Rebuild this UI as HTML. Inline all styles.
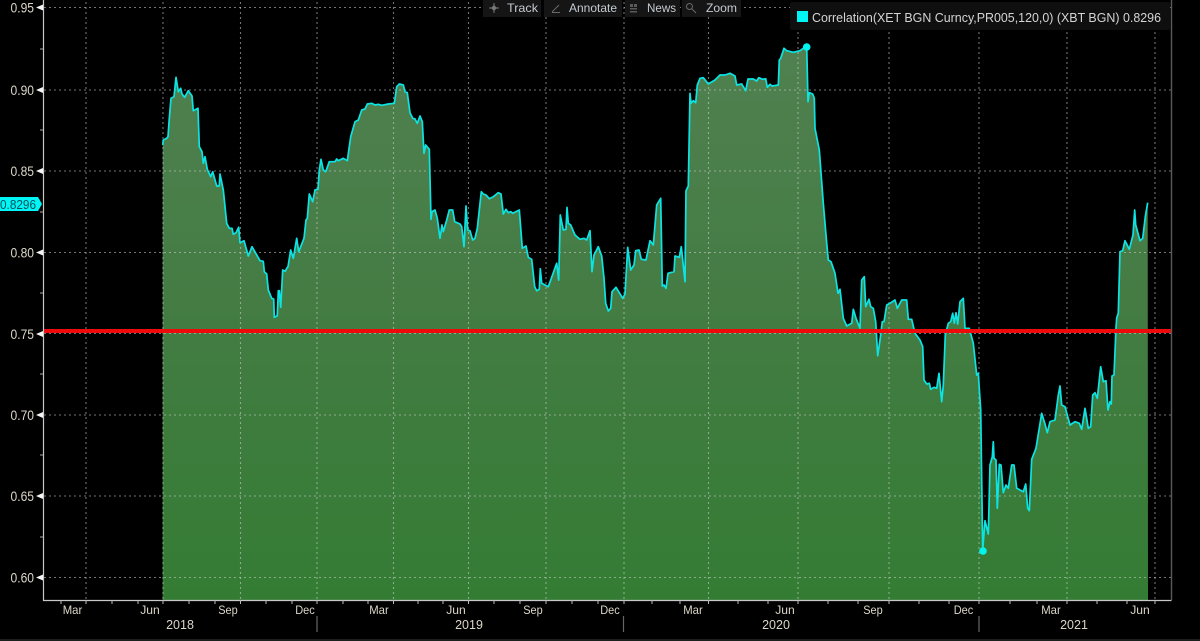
<!DOCTYPE html>
<html><head><meta charset="utf-8"><title>Correlation chart</title>
<style>
html,body{margin:0;padding:0;background:#000;width:1200px;height:641px;overflow:hidden}
svg{display:block}
text{font-family:"Liberation Sans",sans-serif;fill:#dcd6c8}
</style></head><body>
<svg width="1200" height="641" viewBox="0 0 1200 641" xmlns="http://www.w3.org/2000/svg">
<defs><linearGradient id="g" gradientUnits="userSpaceOnUse" x1="0" y1="45" x2="0" y2="600">
<stop offset="0" stop-color="#508050"/><stop offset="0.5" stop-color="#437c43"/><stop offset="1" stop-color="#347c34"/></linearGradient></defs>
<rect width="1200" height="641" fill="#000"/>
<polygon fill="url(#g)" points="162.7,600 162.7,145 163.3,140 166.7,138.3 168,136.7 169.3,118.3 171,98.3 174,96.7 176,77.3 178.3,91.7 180.7,88.3 182,94 184.7,97.3 188.3,90.7 192,96 193.3,110.7 198,108.3 199.3,146.7 202,151.7 203.3,163.3 205,156.7 207.3,169.3 210.7,176.7 212.7,171.7 216.7,186 219.3,186 220,174 223.3,190 226.7,223.3 229.3,228.3 232,228.3 233.3,234.3 236,232.7 238.7,227.3 240,242.7 244,240.7 248.3,256 252,246.7 260,260.7 263.3,261.3 264.3,271.7 266.7,274 268.3,290 271.7,298.3 273.7,299 274.3,317.3 277.3,315.7 278.3,290.7 279.3,290.7 280.7,307.3 282.7,270 285.3,271.3 286.7,268.3 288,266.7 290.7,250 293.3,258.3 296.7,238.3 298.7,251.7 304,238.3 306,220 307.3,218.3 309.3,194 312.7,201.7 315,190 318,189.3 319.3,170 321,159.3 323.3,170 325.7,171.7 329.3,161.7 335,161.7 336.7,159 338.3,160.7 343.3,158.3 347.3,160.7 350.7,136.7 355,121.7 358.3,120 361.7,110 365,109 367.3,104 371.7,103.3 375,105 378.3,104.3 381.7,105.3 388.3,104 394.3,103.3 396.7,86.7 399.3,84 403.3,85 405,91.7 407.3,92.7 410,112.7 412.7,118.3 415,119 417.3,123.3 420,116 422.3,121.7 424,153.3 425.7,145 429.3,149.3 431,219.3 432,211.7 435,210 437.3,218.3 440,238.3 442,225 443.3,231.7 446.7,220 449.3,210 452.7,210 454.7,221.7 460,224 461.7,226.7 464,246.7 466,206 467.7,230 470,230.7 472.7,240 475,238.3 477.3,228.3 481.3,191.7 483.3,194 486,195 489.3,198.7 493.3,196.7 498.3,192.7 501,194 503.3,214 506,209.3 508.3,212.7 510.7,211.7 512.7,213.3 519.3,210 522.3,248.3 526,246 528.3,257.3 531.7,259.3 534.7,286.7 536.7,290.7 539.3,289.3 540.3,268.7 541.7,283.3 548.3,286.7 556.7,263.3 558.7,280 560.3,215 563.3,230 566,229.3 567,207.3 568.3,223.3 570.7,225 575,235 580,239.3 584,238.3 586.7,240 590,230.7 592,271.7 594,255 598.3,246.7 601.7,256 604,278.3 605.7,303.3 608.3,311 610.7,308.3 612,291.7 616,287.3 622.7,298.3 625,294 627.7,247.3 630.7,270 634,265 635.7,250.7 639,250 641.3,259.3 646,260 650,240.7 653.3,245 656.7,205 660.7,198.3 662.3,286 664,285 666,288.3 668,273.3 674,271.7 675,256 679.3,257.3 681.3,246.7 685,281.7 686,190.7 688.3,186 690,93.3 691,103.3 693.3,100.7 695.7,102.7 697.3,85 700,78.3 703.3,77.7 708.3,84 715,80 720,75 725,75 730,73.3 735,76 736.7,85 741.7,84 745.7,90.7 748,79 753.3,79 756.7,81 758.7,77.7 762.7,79.3 765.7,78.7 767.3,87.3 770,84.3 772,86 778.3,85 779.3,60 780.7,58.3 784,48.3 786.7,50.7 793.3,52.3 800,50.7 803.3,48.3 806.7,46.7 808,101.7 809.3,92.7 812.7,94 814.3,98.3 815,128.3 819.3,150 823.3,203.3 826.7,243.3 828.3,260 831,261.7 835,273.3 838,293.3 840,289.3 843.3,318.3 846.7,326 851.7,323.3 853.3,309.3 856,318.3 860,328.3 861.7,280 864.3,276.7 865.7,306.7 869,299.3 870.7,306.7 873.3,308.3 875.7,321.7 877.7,355.7 880,340 882.3,321.7 884,321.7 886.7,305 890,303.3 895,300 897.3,308.3 901.7,300 906.7,300 908.3,319.3 911.7,319.3 915,333.3 920,340 922.7,346.7 924,380 926.7,384 929.3,383.3 930.7,389.3 934,387.3 936.7,388.3 939,373.3 941.7,401.7 943.3,385 945.3,335 948.3,323.3 950.7,321.7 952.7,313.3 954.3,323.3 956,312.7 957.7,324 960,301.7 963.3,298.3 965,328.3 969.3,328.3 973.3,343.3 976.7,375 978.3,373.3 980.7,410 982.7,550 985,520.7 988.3,534 990,465 992.3,456.7 993.3,441.7 994,458.3 996,460 997.3,508.3 999.3,464.3 1001,465 1003.3,492.7 1006,485 1008.3,488.3 1011.7,465 1014,465 1016.7,488.3 1023.3,491.7 1025.7,484 1027.7,508.3 1029.3,510.7 1031.7,459.3 1036,448.3 1041.7,413.3 1045,424 1047.3,432.7 1050,421.7 1055,420 1058.3,395 1060,386 1061.7,405 1065,406.7 1070,425 1075,421.7 1079.3,423.3 1081.7,429.3 1085,408.3 1088.3,428.3 1090.7,426.7 1092.7,395 1095,392.7 1097.3,398.3 1100.7,366.7 1103.3,381.7 1106,380.7 1108,410 1110,401.7 1111.3,404 1112,376 1114,375 1116,328 1116.7,318 1118.3,313 1120,251.7 1122.7,250.7 1125,240.7 1129.3,249.3 1133,235 1134.7,210 1135.7,225 1140,240.7 1142.7,238.3 1145.3,216.7 1147.7,202.7 1148,600"/>
<g stroke="#d2d2d2" stroke-opacity=".55" stroke-width="1.100" stroke-dasharray="2 3" fill="none">
<path d="M44 7.500H1171M44 90H1171M44 171H1171M44 252.500H1171M44 333.500H1171M44 415H1171M44 496H1171M44 577.500H1171"/>
<path d="M86 2V600M163 2V600M240.500 2V600M317 2V600M393.500 2V600M468.500 2V600M546 2V600M624 2V600M708.500 2V600M798 2V600M889 2V600M979 2V600M1067 2V600M1155 2V600"/>
</g>
<polyline fill="none" stroke="#0ce4e4" stroke-width="1.700" stroke-linejoin="round" points="162.7,145 163.3,140 166.7,138.3 168,136.7 169.3,118.3 171,98.3 174,96.7 176,77.3 178.3,91.7 180.7,88.3 182,94 184.7,97.3 188.3,90.7 192,96 193.3,110.7 198,108.3 199.3,146.7 202,151.7 203.3,163.3 205,156.7 207.3,169.3 210.7,176.7 212.7,171.7 216.7,186 219.3,186 220,174 223.3,190 226.7,223.3 229.3,228.3 232,228.3 233.3,234.3 236,232.7 238.7,227.3 240,242.7 244,240.7 248.3,256 252,246.7 260,260.7 263.3,261.3 264.3,271.7 266.7,274 268.3,290 271.7,298.3 273.7,299 274.3,317.3 277.3,315.7 278.3,290.7 279.3,290.7 280.7,307.3 282.7,270 285.3,271.3 286.7,268.3 288,266.7 290.7,250 293.3,258.3 296.7,238.3 298.7,251.7 304,238.3 306,220 307.3,218.3 309.3,194 312.7,201.7 315,190 318,189.3 319.3,170 321,159.3 323.3,170 325.7,171.7 329.3,161.7 335,161.7 336.7,159 338.3,160.7 343.3,158.3 347.3,160.7 350.7,136.7 355,121.7 358.3,120 361.7,110 365,109 367.3,104 371.7,103.3 375,105 378.3,104.3 381.7,105.3 388.3,104 394.3,103.3 396.7,86.7 399.3,84 403.3,85 405,91.7 407.3,92.7 410,112.7 412.7,118.3 415,119 417.3,123.3 420,116 422.3,121.7 424,153.3 425.7,145 429.3,149.3 431,219.3 432,211.7 435,210 437.3,218.3 440,238.3 442,225 443.3,231.7 446.7,220 449.3,210 452.7,210 454.7,221.7 460,224 461.7,226.7 464,246.7 466,206 467.7,230 470,230.7 472.7,240 475,238.3 477.3,228.3 481.3,191.7 483.3,194 486,195 489.3,198.7 493.3,196.7 498.3,192.7 501,194 503.3,214 506,209.3 508.3,212.7 510.7,211.7 512.7,213.3 519.3,210 522.3,248.3 526,246 528.3,257.3 531.7,259.3 534.7,286.7 536.7,290.7 539.3,289.3 540.3,268.7 541.7,283.3 548.3,286.7 556.7,263.3 558.7,280 560.3,215 563.3,230 566,229.3 567,207.3 568.3,223.3 570.7,225 575,235 580,239.3 584,238.3 586.7,240 590,230.7 592,271.7 594,255 598.3,246.7 601.7,256 604,278.3 605.7,303.3 608.3,311 610.7,308.3 612,291.7 616,287.3 622.7,298.3 625,294 627.7,247.3 630.7,270 634,265 635.7,250.7 639,250 641.3,259.3 646,260 650,240.7 653.3,245 656.7,205 660.7,198.3 662.3,286 664,285 666,288.3 668,273.3 674,271.7 675,256 679.3,257.3 681.3,246.7 685,281.7 686,190.7 688.3,186 690,93.3 691,103.3 693.3,100.7 695.7,102.7 697.3,85 700,78.3 703.3,77.7 708.3,84 715,80 720,75 725,75 730,73.3 735,76 736.7,85 741.7,84 745.7,90.7 748,79 753.3,79 756.7,81 758.7,77.7 762.7,79.3 765.7,78.7 767.3,87.3 770,84.3 772,86 778.3,85 779.3,60 780.7,58.3 784,48.3 786.7,50.7 793.3,52.3 800,50.7 803.3,48.3 806.7,46.7 808,101.7 809.3,92.7 812.7,94 814.3,98.3 815,128.3 819.3,150 823.3,203.3 826.7,243.3 828.3,260 831,261.7 835,273.3 838,293.3 840,289.3 843.3,318.3 846.7,326 851.7,323.3 853.3,309.3 856,318.3 860,328.3 861.7,280 864.3,276.7 865.7,306.7 869,299.3 870.7,306.7 873.3,308.3 875.7,321.7 877.7,355.7 880,340 882.3,321.7 884,321.7 886.7,305 890,303.3 895,300 897.3,308.3 901.7,300 906.7,300 908.3,319.3 911.7,319.3 915,333.3 920,340 922.7,346.7 924,380 926.7,384 929.3,383.3 930.7,389.3 934,387.3 936.7,388.3 939,373.3 941.7,401.7 943.3,385 945.3,335 948.3,323.3 950.7,321.7 952.7,313.3 954.3,323.3 956,312.7 957.7,324 960,301.7 963.3,298.3 965,328.3 969.3,328.3 973.3,343.3 976.7,375 978.3,373.3 980.7,410 982.7,550 985,520.7 988.3,534 990,465 992.3,456.7 993.3,441.7 994,458.3 996,460 997.3,508.3 999.3,464.3 1001,465 1003.3,492.7 1006,485 1008.3,488.3 1011.7,465 1014,465 1016.7,488.3 1023.3,491.7 1025.7,484 1027.7,508.3 1029.3,510.7 1031.7,459.3 1036,448.3 1041.7,413.3 1045,424 1047.3,432.7 1050,421.7 1055,420 1058.3,395 1060,386 1061.7,405 1065,406.7 1070,425 1075,421.7 1079.3,423.3 1081.7,429.3 1085,408.3 1088.3,428.3 1090.7,426.7 1092.7,395 1095,392.7 1097.3,398.3 1100.7,366.7 1103.3,381.7 1106,380.7 1108,410 1110,401.7 1111.3,404 1112,376 1114,375 1116,328 1116.7,318 1118.3,313 1120,251.7 1122.7,250.7 1125,240.7 1129.3,249.3 1133,235 1134.7,210 1135.7,225 1140,240.7 1142.7,238.3 1145.3,216.7 1147.7,202.7"/>
<circle cx="806.700" cy="47" r="3.800" fill="#00f5f0"/>
<circle cx="983" cy="551" r="3.800" fill="#00f5f0"/>
<rect x="44" y="329" width="1127" height="4" fill="#ee0a0a"/>
<!-- axes -->
<path d="M43.500 0V600.500H1171.500" fill="none" stroke="#c8c8c8" stroke-width="1.200"/>
<path d="M1171.500 0V600" stroke="#5a5a5a" stroke-width="1.400"/>
<g fill="#f4f4f4"><polygon points="36,7.500 43,4.500 43,10.500"/><polygon points="36,90 43,87 43,93"/><polygon points="36,171 43,168 43,174"/><polygon points="36,252.500 43,249.500 43,255.500"/><polygon points="36,334 43,331 43,337"/><polygon points="36,415 43,412 43,418"/><polygon points="36,496 43,493 43,499"/><polygon points="36,577.500 43,574.500 43,580.500"/></g>
<path d="M40 49H43M40 130H43M40 212H43M40 293H43M40 374H43M40 455H43M40 537H43" stroke="#aaa"/>
<path stroke="#bbb" d="M61 600v4M86 600v4M112 600v4M138 600v4M163 600v4M189 600v4M215 600v4M240.500 600v4M266 600v4M292 600v4M317 600v4M343 600v4M368 600v4M393.500 600v4M418 600v4M443 600v4M468.500 600v4M494 600v4M520 600v4M546 600v4M572 600v4M598 600v4M624 600v4M652 600v4M680 600v4M708.500 600v4M738 600v4M768 600v4M798 600v4M828 600v4M858 600v4M889 600v4M919 600v4M949 600v4M979 600v4M1010 600v4M1037 600v4M1067 600v4M1097 600v4M1127 600v4M1155 600v4"/>
<path stroke="#666" stroke-width="1.200" d="M317 616V632M623.500 616V632M979 616V632"/>
<rect x="0" y="639" width="1200" height="2" fill="#1e1e1e"/>
<!-- y labels -->
<g font-size="13.500">
<text x="10.500" y="12.500" textLength="23.500" lengthAdjust="spacingAndGlyphs">0.95</text><text x="10.500" y="95" textLength="23.500" lengthAdjust="spacingAndGlyphs">0.90</text><text x="10.500" y="176" textLength="23.500" lengthAdjust="spacingAndGlyphs">0.85</text><text x="10.500" y="257.500" textLength="23.500" lengthAdjust="spacingAndGlyphs">0.80</text><text x="10.500" y="339" textLength="23.500" lengthAdjust="spacingAndGlyphs">0.75</text><text x="10.500" y="420" textLength="23.500" lengthAdjust="spacingAndGlyphs">0.70</text><text x="10.500" y="501" textLength="23.500" lengthAdjust="spacingAndGlyphs">0.65</text><text x="10.500" y="582.500" textLength="23.500" lengthAdjust="spacingAndGlyphs">0.60</text>
</g>
<polygon points="0,197 38,197 42,204 38,211 0,211" fill="#00f6f6"/>
<text x="0" y="209" font-size="13" textLength="36" lengthAdjust="spacingAndGlyphs" style="fill:#05505a">0.8296</text>
<!-- x labels -->
<g font-size="12" text-anchor="middle">
<text x="72.500" y="614" textLength="19.500" lengthAdjust="spacingAndGlyphs">Mar</text><text x="150" y="614" textLength="19.500" lengthAdjust="spacingAndGlyphs">Jun</text><text x="228" y="614" textLength="19.500" lengthAdjust="spacingAndGlyphs">Sep</text><text x="305" y="614" textLength="19.500" lengthAdjust="spacingAndGlyphs">Dec</text><text x="379" y="614" textLength="19.500" lengthAdjust="spacingAndGlyphs">Mar</text><text x="456" y="614" textLength="19.500" lengthAdjust="spacingAndGlyphs">Jun</text><text x="533" y="614" textLength="19.500" lengthAdjust="spacingAndGlyphs">Sep</text><text x="610" y="614" textLength="19.500" lengthAdjust="spacingAndGlyphs">Dec</text><text x="693" y="614" textLength="19.500" lengthAdjust="spacingAndGlyphs">Mar</text><text x="785" y="614" textLength="19.500" lengthAdjust="spacingAndGlyphs">Jun</text><text x="873" y="614" textLength="19.500" lengthAdjust="spacingAndGlyphs">Sep</text><text x="963.500" y="614" textLength="19.500" lengthAdjust="spacingAndGlyphs">Dec</text><text x="1051" y="614" textLength="19.500" lengthAdjust="spacingAndGlyphs">Mar</text><text x="1140" y="614" textLength="19.500" lengthAdjust="spacingAndGlyphs">Jun</text>
<text x="180" y="629" font-size="12.500">2018</text><text x="469" y="629" font-size="12.500">2019</text><text x="776" y="629" font-size="12.500">2020</text><text x="1074" y="629" font-size="12.500">2021</text>
</g>
<!-- toolbar -->
<g fill="#151515"><rect x="483" y="0" width="58" height="17"/><rect x="544" y="0" width="78" height="17"/><rect x="625" y="0" width="55" height="17"/><rect x="682" y="0" width="59" height="17"/></g>
<path d="M494 3V13M489 8H499" stroke="#666" stroke-width="1.200"/><polygon points="494,5 497,8 494,11 491,8" fill="#777"/>
<path d="M552 12L559 5M552 12.500H560" stroke="#6a6a6a" fill="none"/>
<g fill="#5a5a5a"><rect x="630" y="4" width="3" height="3"/><rect x="634" y="4" width="3" height="3"/><rect x="630" y="8" width="7" height="1.500"/><rect x="630" y="11" width="7" height="1.500"/></g>
<circle cx="689.500" cy="6.500" r="3" fill="none" stroke="#6a6a6a"/><path d="M692 9L696 13" stroke="#6a6a6a"/>
<g font-size="12">
<text x="507" y="12" textLength="31" lengthAdjust="spacingAndGlyphs" style="fill:#c4cbd0">Track</text>
<text x="569" y="12" textLength="48" lengthAdjust="spacingAndGlyphs" style="fill:#c4cbd0">Annotate</text>
<text x="647" y="12" textLength="29" lengthAdjust="spacingAndGlyphs" style="fill:#c4cbd0">News</text>
<text x="706" y="12" textLength="31" lengthAdjust="spacingAndGlyphs" style="fill:#c4cbd0">Zoom</text>
</g>
<!-- legend -->
<rect x="790" y="2" width="380" height="28" rx="2" fill="#0f0f0f"/>
<rect x="797" y="11" width="11" height="11" fill="#00f6f6"/>
<text x="812" y="22" font-size="12.500" textLength="349" lengthAdjust="spacingAndGlyphs" style="fill:#d4d4d4">Correlation(XET BGN Curncy,PR005,120,0) (XBT BGN) 0.8296</text>
</svg>
</body></html>
